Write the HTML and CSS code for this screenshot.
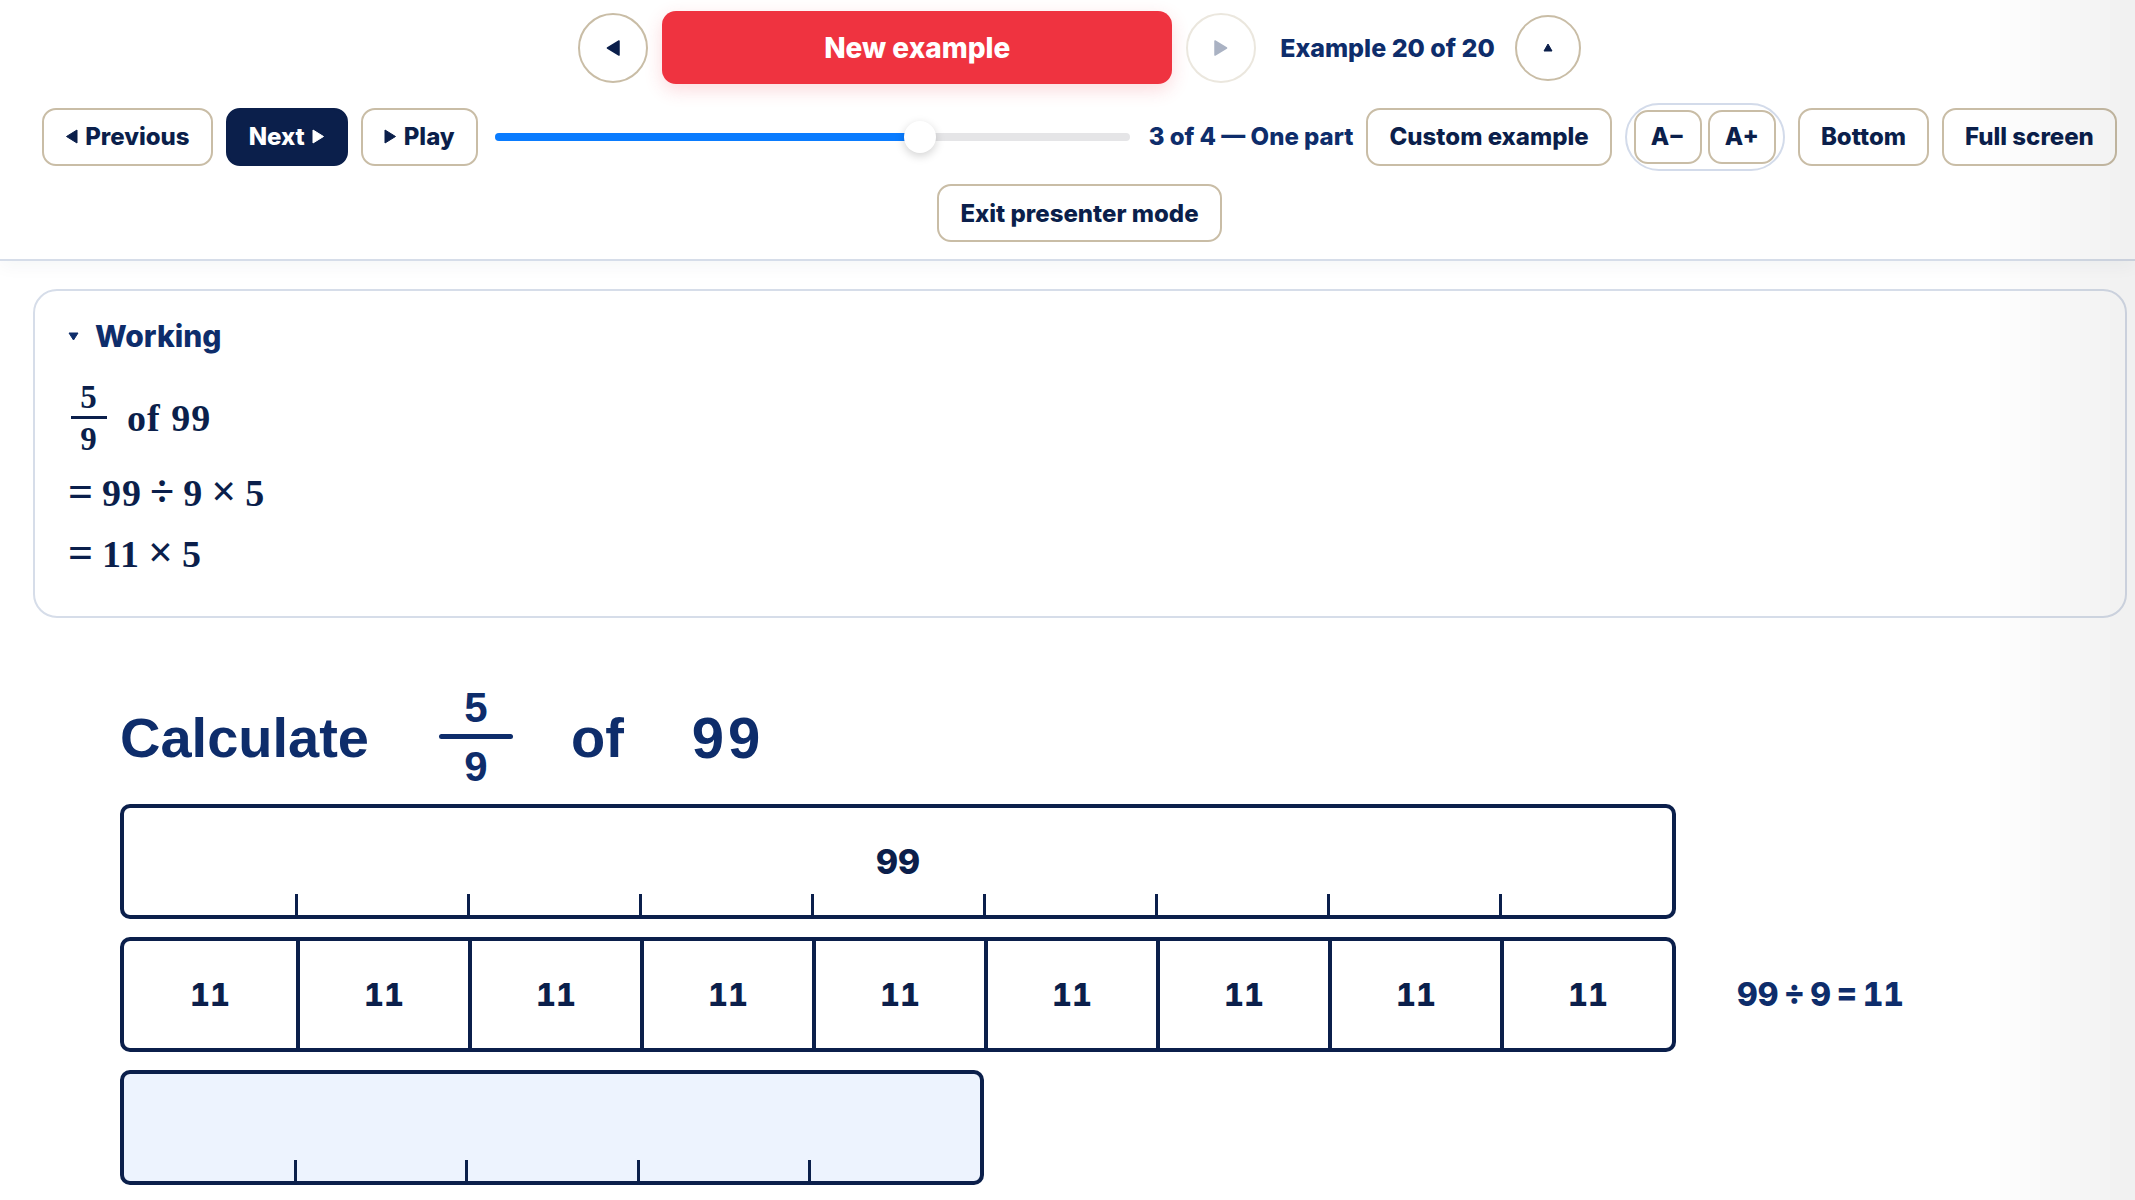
FILE: index.html
```html
<!DOCTYPE html>
<html lang="en">
<head>
    <meta charset="UTF-8">
    <meta name="viewport" content="width=device-width, initial-scale=1.0">
    <title>Fraction of an amount</title>
    <link rel="stylesheet" href="styles.css">
</head>
<body>
    <header class="toolbar">
        <div class="row row-main">
            <button class="circle-btn" aria-label="Previous example">
                <svg width="14" height="16" viewBox="0 0 14 16"><path d="M13 1 L1.5 8 L13 15 Z" fill="#0b1f4b" stroke="#0b1f4b" stroke-width="1.5" stroke-linejoin="round"/></svg>
            </button>
            <button class="new-btn">New example</button>
            <button class="circle-btn is-disabled" aria-label="Next example">
                <svg width="14" height="16" viewBox="0 0 14 16"><path d="M1 1 L12.5 8 L1 15 Z" fill="#aab2c3" stroke="#aab2c3" stroke-width="1.5" stroke-linejoin="round"/></svg>
            </button>
            <span class="counter">Example 20 of 20</span>
            <button class="circle-btn circle-up" aria-label="Collapse">
                <svg width="10" height="9" viewBox="0 0 10 9"><path d="M5 1 L9 8 L1 8 Z" fill="#0b1f4b" stroke="#0b1f4b" stroke-width="1" stroke-linejoin="round"/></svg>
            </button>
        </div>

        <div class="row row-controls">
            <button class="btn">
                <svg width="13" height="15" viewBox="0 0 13 15"><path d="M12 1 L1.5 7.5 L12 14 Z" fill="#0b1f4b" stroke="#0b1f4b" stroke-width="1" stroke-linejoin="round"/></svg>
                Previous
            </button>
            <button class="btn btn-dark">
                Next
                <svg width="13" height="15" viewBox="0 0 13 15"><path d="M1 1 L11.5 7.5 L1 14 Z" fill="#ffffff" stroke="#ffffff" stroke-width="1" stroke-linejoin="round"/></svg>
            </button>
            <button class="btn">
                <svg width="13" height="15" viewBox="0 0 13 15"><path d="M1 1 L11.5 7.5 L1 14 Z" fill="#0b1f4b" stroke="#0b1f4b" stroke-width="1" stroke-linejoin="round"/></svg>
                Play
            </button>
            <div class="slider">
                <div class="slider-fill" style="width: 67%;"></div>
                <span class="slider-thumb" style="left: 67%;"></span>
            </div>
            <span class="step-label">3 of 4 — One part</span>
            <button class="btn">Custom example</button>
            <div class="font-group">
                <button class="btn btn-sm">A−</button>
                <button class="btn btn-sm">A+</button>
            </div>
            <button class="btn">Bottom</button>
            <button class="btn">Full screen</button>
        </div>

        <div class="row row-exit">
            <button class="btn">Exit presenter mode</button>
        </div>
    </header>

    <main class="content">
        <details class="working" open>
            <summary>
                <svg width="11" height="9" viewBox="0 0 11 9"><path d="M1 1 L10 1 L5.5 8 Z" fill="#0e2d6b" stroke="#0e2d6b" stroke-width="1" stroke-linejoin="round"/></svg>
                Working
            </summary>
            <div class="math">
                <div class="math-line first">
                    <span class="frac"><span>5</span><span class="frac-bar"></span><span>9</span></span>
                    <span>of 99</span>
                </div>
                <div class="math-line"><span class="op">=</span>99<span class="op">÷</span>9<span class="op">×</span>5</div>
                <div class="math-line"><span class="op">=</span>11<span class="op">×</span>5</div>
            </div>
        </details>

        <section class="lesson">
            <h2 class="question">
                <span>Calculate</span>
                <span class="q-frac"><span>5</span><span class="q-frac-bar"></span><span>9</span></span>
                <span class="q-of">of</span>
                <span class="q-num">99</span>
            </h2>

            <div class="bar-row">
                <div class="bar">
                    <div class="bar-label">99</div>
                    <div class="ticks ticks-9">
                        <span></span><span></span><span></span><span></span><span></span><span></span><span></span><span></span><span></span>
                    </div>
                </div>
            </div>

            <div class="bar-row">
                <div class="bar bar-cells">
                    <span>11</span><span>11</span><span>11</span><span>11</span><span>11</span><span>11</span><span>11</span><span>11</span><span>11</span>
                </div>
                <span class="bar-note">99 ÷ 9 = 11</span>
            </div>

            <div class="bar-row">
                <div class="bar bar-part">
                    <div class="bar-label"></div>
                    <div class="ticks ticks-5">
                        <span></span><span></span><span></span><span></span><span></span>
                    </div>
                </div>
            </div>
        </section>
    </main>

    <div class="edge-shade"></div>
</body>
</html>
```

FILE: styles.css
```css
body {
    margin: 0;
    font-family: Inter, "Noto Sans", sans-serif;
    color: #0b1f4b;
    background-color: #ffffff;
    overflow: hidden;
}
button {
    font-family: inherit;
}

/* toolbar */
.toolbar {
    padding: 11px 0 17px 24px;
    border-bottom: 2px solid #d6dde9;
    box-shadow: 0 6px 16px rgba(20, 40, 80, 0.04);
}
.row {
    display: flex;
    align-items: center;
    justify-content: center;
    gap: 13px;
}
.row-controls {
    margin-top: 18px;
    min-height: 69px;
}
.row-exit {
    margin-top: 13px;
}
.row-main {
    gap: 14px;
}
.circle-btn {
    width: 70px;
    height: 70px;
    border-radius: 50%;
    border: 2px solid #c9bda6;
    background: #ffffff;
    display: flex;
    align-items: center;
    justify-content: center;
    padding: 0;
}
.circle-btn.is-disabled {
    border-color: #ebe7de;
}
.circle-up {
    width: 66px;
    height: 66px;
}
.new-btn {
    width: 510px;
    height: 73px;
    border: none;
    border-radius: 14px;
    background-color: #ef3340;
    color: #ffffff;
    font-size: 28px;
    font-weight: 800;
    box-shadow: 0 6px 18px rgba(239, 51, 64, 0.18);
}
.counter {
    margin: 0 6px 0 10px;
    font-size: 25px;
    font-weight: 800;
    color: #0e2d6b;
}
.btn {
    height: 58px;
    padding: 0 21px;
    border: 2px solid #c9bda6;
    border-radius: 14px;
    background: #ffffff;
    color: #0b1f4b;
    font-size: 24px;
    font-weight: 800;
    display: flex;
    align-items: center;
    gap: 7px;
}
.btn-dark {
    background-color: #0b1f4b;
    border-color: #0b1f4b;
    color: #ffffff;
}
.btn-sm {
    height: 54px;
    padding: 0 15px;
}
.font-group {
    display: flex;
    gap: 6px;
    padding: 5px 7px;
    border: 2px solid #d3dbea;
    border-radius: 36px;
}
.slider {
    position: relative;
    width: 635px;
    height: 8px;
    margin: 0 6px 0 4px;
    border-radius: 4px;
    background-color: #e5e5e7;
}
.slider-fill {
    height: 100%;
    border-radius: 4px;
    background-color: #0a7cff;
}
.slider-thumb {
    position: absolute;
    top: 50%;
    width: 32px;
    height: 32px;
    margin: -16px 0 0 -16px;
    border-radius: 50%;
    background: #ffffff;
    box-shadow: 0 3px 10px rgba(0, 0, 0, 0.18);
}
.step-label {
    font-size: 24px;
    font-weight: 800;
    color: #0e2d6b;
}

/* content */
.content {
    padding: 28px 8px 0 33px;
}
.working {
    border: 2px solid #d6dde9;
    border-radius: 24px;
    padding: 27px 33px 38px;
}
.working summary {
    list-style: none;
    display: flex;
    align-items: center;
    gap: 16px;
    font-size: 30px;
    line-height: 36px;
    font-weight: 800;
    color: #0e2d6b;
}
.working summary::-webkit-details-marker {
    display: none;
}
.math {
    font-family: "Liberation Serif", serif;
    font-weight: 700;
    font-size: 38px;
    color: #0b1f4b;
    letter-spacing: 1px;
}
.math-line {
    line-height: 48px;
    margin-top: 12px;
}
.math-line.first {
    display: flex;
    align-items: center;
    gap: 20px;
    margin-top: 26px;
    line-height: normal;
}
.op {
    font-size: 44px;
    margin: 0 8px;
}
.op:first-child {
    margin-left: 0;
}
.frac {
    display: flex;
    flex-direction: column;
    align-items: center;
    font-size: 33px;
    line-height: 34px;
    margin-left: 3px;
}
.frac-bar {
    width: 36px;
    height: 3px;
    margin: 2px 0 3px;
    background-color: #0b1f4b;
}

.lesson {
    padding-left: 87px;
}
.question {
    display: flex;
    align-items: center;
    gap: 58px;
    margin: 68px 0 15px;
    font-family: "Liberation Sans", Arial, sans-serif;
    font-size: 56px;
    font-weight: 700;
    color: #0e2d6b;
}
.q-frac {
    display: flex;
    flex-direction: column;
    align-items: center;
    font-size: 42px;
    line-height: 44px;
    margin-left: 12px;
}
.q-frac-bar {
    width: 74px;
    height: 5px;
    border-radius: 3px;
    margin: 4px 0 6px;
    background-color: #0e2d6b;
}
.q-num {
    margin-left: 10px;
    font-size: 58px;
    letter-spacing: 4px;
}

.bar-row {
    display: flex;
    align-items: center;
    gap: 61px;
    margin-bottom: 18px;
}
.bar {
    box-sizing: border-box;
    width: 1556px;
    height: 115px;
    border: 4px solid #0b1f4b;
    border-radius: 10px;
    display: flex;
    flex-direction: column;
}
.bar-label {
    flex: 1;
    display: flex;
    align-items: center;
    justify-content: center;
    padding-top: 20px;
    font-size: 34px;
    font-weight: 800;
    font-variant-numeric: tabular-nums;
}
.ticks {
    display: grid;
    height: 21px;
}
.ticks-9 {
    grid-template-columns: repeat(9, 1fr);
}
.ticks-5 {
    grid-template-columns: repeat(5, 1fr);
}
.ticks span {
    border-right: 3px solid #0b1f4b;
    margin-right: -2px;
}
.ticks span:last-child {
    border-right: none;
}
.bar-cells {
    display: grid;
    grid-template-columns: repeat(9, 1fr);
}
.bar-cells span {
    display: flex;
    align-items: center;
    justify-content: center;
    border-left: 4px solid #0b1f4b;
    font-size: 31px;
    font-weight: 800;
    font-variant-numeric: tabular-nums;
}
.bar-cells span:first-child {
    border-left: none;
}
.bar-note {
    font-size: 32px;
    font-weight: 800;
    color: #0e2d6b;
    font-variant-numeric: tabular-nums;
    word-spacing: -3px;
}
.bar-part {
    width: 864px;
    background-color: #edf3fe;
}

.edge-shade {
    position: fixed;
    top: 0;
    right: 0;
    bottom: 0;
    width: 150px;
    pointer-events: none;
    background: linear-gradient(to right, rgba(0, 0, 0, 0), rgba(0, 0, 0, 0.06));
}
```
